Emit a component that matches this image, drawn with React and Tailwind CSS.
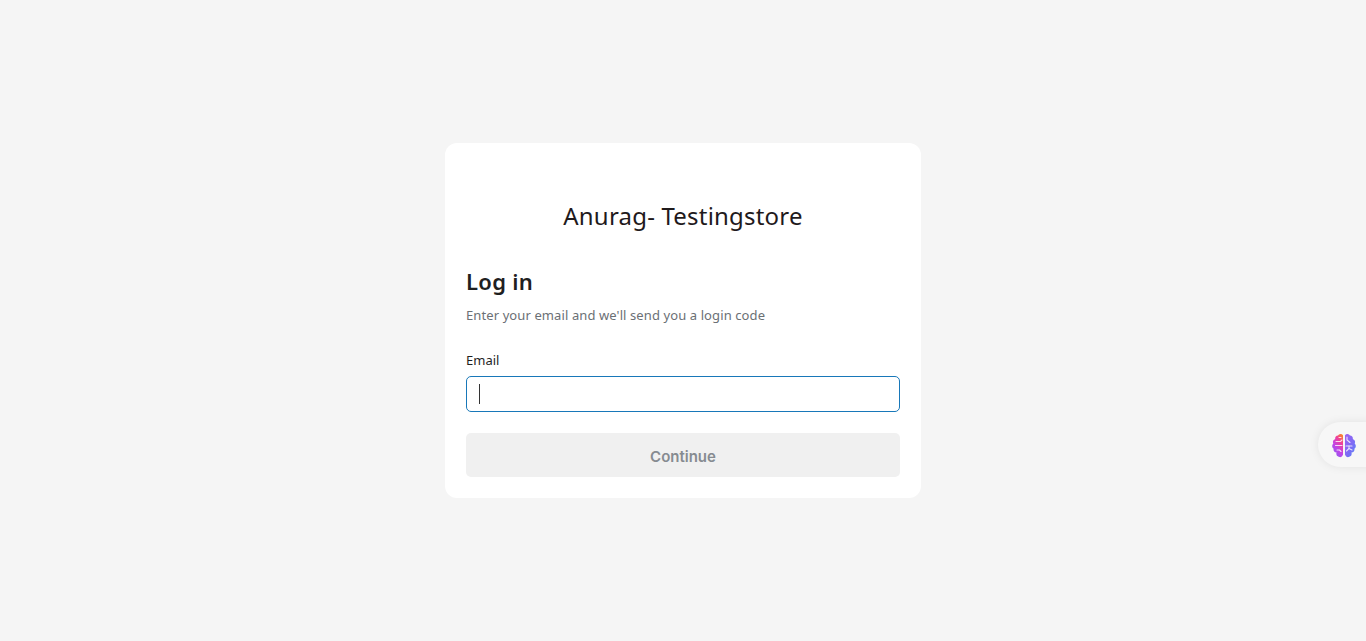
function BrainIcon() {
    return (
        <svg width="26" height="26" viewBox="0 0 26 26" className="block">
            <defs>
                <linearGradient id="brainLeft" x1="0.9" y1="0" x2="0.3" y2="1">
                    <stop offset="0" stopColor="#fb8a1e" />
                    <stop offset="0.3" stopColor="#f0409a" />
                    <stop offset="0.65" stopColor="#c044e8" />
                    <stop offset="1" stopColor="#8f5cf0" />
                </linearGradient>
                <linearGradient id="brainRight" x1="0" y1="0" x2="1" y2="1">
                    <stop offset="0" stopColor="#a060f0" />
                    <stop offset="0.6" stopColor="#7a6cf5" />
                    <stop offset="1" stopColor="#4f8cf8" />
                </linearGradient>
            </defs>
            <path fill="url(#brainLeft)" d="M12 3.200A3 3 0 0 0 7 3.500 3 3 0 0 0 4.200 7 3.400 3.400 0 0 0 2.300 11.500 3.400 3.400 0 0 0 2.600 16.800 3 3 0 0 0 5.600 20.500 3.200 3.200 0 0 0 12 22.800Z" />
            <path fill="url(#brainRight)" d="M14 3.200A3 3 0 0 1 19 3.500 3 3 0 0 1 21.800 7 3.400 3.400 0 0 1 23.700 11.500 3.400 3.400 0 0 1 23.400 16.800 3 3 0 0 1 20.400 20.500 3.200 3.200 0 0 1 14 22.800Z" />
            <g stroke="#ffffff" strokeWidth="1.100" fill="none" strokeLinecap="round" opacity="0.8">
                <path d="M5 9.500h4.500L11 8" />
                <path d="M4.500 13.500H11" />
                <path d="M6 18h2.500l1.500 1.500" />
                <path d="M8 5.500h2" />
                <path d="M16 5v3l3 2.500" />
                <path d="M15 14h6" />
                <path d="M18 14v2.500l-2.500 2.500" />
                <path d="M21 18l-3-1.500" />
            </g>
        </svg>
    )
}

export default function App() {
    return (
        <div className="relative min-h-screen flex items-center justify-center overflow-hidden bg-[#f5f5f5] font-['Noto_Sans',sans-serif]">
            <div className="w-[476px] h-[355px] rounded-[12px] bg-white p-[21px] pt-0 flex flex-col">
                <h1 className="mt-[55px] text-center text-[24px] tracking-[0.2px] leading-[36px] text-[#1f1a1c]">Anurag- Testingstore</h1>
                <h2 className="mt-[32px] text-[22px] tracking-[0.3px] leading-[30px] font-semibold text-[#1f1f1f]">Log in</h2>
                <p className="mt-[9px] text-[13px] tracking-[0.1px] leading-[20px] text-[#6b7075]">Enter your email and we'll send you a login code</p>
                <label className="mt-[25px] text-[13px] leading-[20px] text-[#1f1f1f]">Email</label>
                <div className="mt-[6px] h-[36px] rounded-[5px] border border-[#1878b9] bg-white flex items-center pl-[12px]">
                    <span className="w-px h-[20px] bg-[#333]" />
                </div>
                <button className="mt-[21px] h-[44px] pt-[4px] rounded-[5px] bg-[#f0f0f0] text-[15px] font-semibold text-[#868b91] font-['Inter',sans-serif]">Continue</button>
            </div>
            <div className="absolute left-[1318px] top-[422px] w-[70px] h-[45px] rounded-full bg-[#f7f7f7] shadow-[0_0_10px_rgba(0,0,0,0.08)] flex items-center pl-[13px]">
                <BrainIcon />
            </div>
        </div>
    )
}
